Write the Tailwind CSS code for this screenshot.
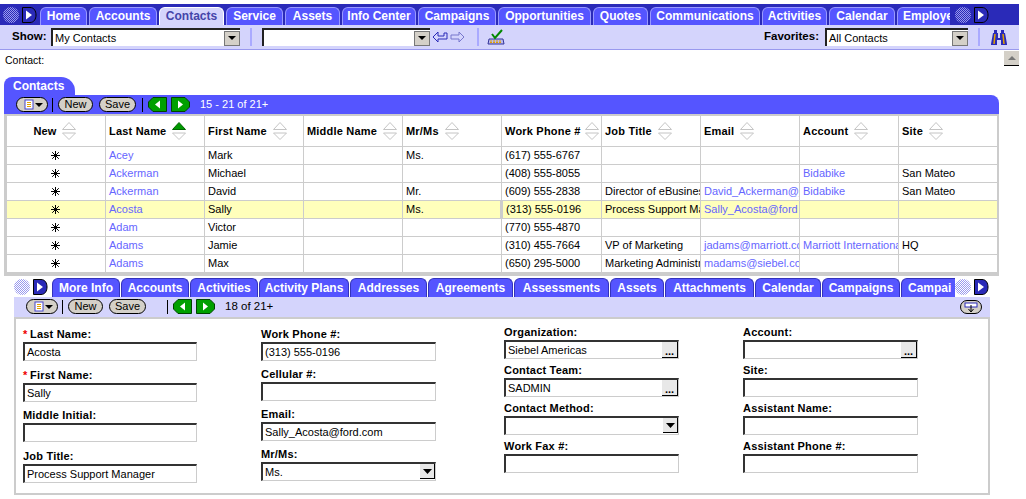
<!DOCTYPE html>
<html lang="en">
<head>
<meta charset="UTF-8" />
<title>Contacts</title>
<script src="https://cdn.jsdelivr.net/npm/@tailwindcss/browser@4"></script>
</head>
<body class="bg-white overflow-hidden">
<svg width="0" height="0" class="absolute">
  <defs>
    <pattern id="dots" width="2" height="2" patternUnits="userSpaceOnUse"><rect width="1" height="1" fill="#9999ee"/><rect x="1" y="1" width="1" height="1" fill="#9999ee"/></pattern>
    <symbol id="sort" viewBox="0 0 14 18"><path d="M7 .5 13.500 7.500H.5Z M.5 11H13.500L7 17.500Z" fill="#fff" stroke="#c4c4c4"/></symbol>
    <symbol id="star" viewBox="0 0 9 9"><path d="M4.500 0V9M0 4.500H9M1.200 1.200 7.800 7.800M7.800 1.200 1.200 7.800" stroke="#000" stroke-width="1"/></symbol>
    <symbol id="navd" viewBox="0 0 34 18"><circle cx="8" cy="9" r="8" fill="url(#dots)"/><path d="M19.500 1.500H27C31 1.500 33 5 33 9S31 16.500 27 16.500H19.500Z" fill="#2a2ab8" stroke="#000"/><path d="M23 4.500 29 9 23 13.500Z" fill="#fff"/></symbol>
    <symbol id="menu" viewBox="0 0 32 15"><rect x=".5" y=".5" width="31" height="14" rx="7" fill="#d4d0c8" stroke="#000"/><rect x="9" y="3" width="8" height="9" fill="#fff" stroke="#4444cc"/><path d="M11 5.500H15M11 7.500H15M11 9.500H15" stroke="#e0a000"/><path d="M19 6H27L23 10Z" fill="#000"/></symbol>
    <symbol id="prev" viewBox="0 0 19 15"><path d="M5 .5H18.500V14.500H5L.5 10V5Z" fill="#00a000" stroke="#004400"/><path d="M12 3.500V11.500L7 7.500Z" fill="#fff"/></symbol>
    <symbol id="next" viewBox="0 0 19 15"><path d="M14 .5H.5V14.500H14L18.500 10V5Z" fill="#00a000" stroke="#004400"/><path d="M7 3.500V11.500L12 7.500Z" fill="#fff"/></symbol>
  </defs>
</svg>

<div class="relative w-[1026px] h-[499px] overflow-hidden font-['Liberation_Sans',Arial,sans-serif] text-[11px] text-black">

  <!-- top tabs -->
  <div class="mt-[4px] h-[21px] w-[1019px] bg-[#2a2ab8] flex items-end">
    <svg class="w-[34px] h-[18px] ml-[3px] mb-[1px] shrink-0"><use href="#navd"/></svg>
    <div class="w-[910px] ml-[3px] h-[18px] overflow-hidden flex gap-[2px] text-[12px] font-bold text-white [&>div]:shrink-0 [&>div]:h-[18px] [&>div]:bg-[#5555ff] [&>div]:border [&>div]:border-b-0 [&>div]:border-[#9999ff] [&>div]:rounded-t-[6px] [&>div]:text-center [&>div]:leading-[17px]">
      <div class="w-[47px]">Home</div>
      <div class="w-[68px]">Accounts</div>
      <div class="w-[65px] !bg-[#d4d4fc] !border-white text-[#4444aa]">Contacts</div>
      <div class="w-[57px]">Service</div>
      <div class="w-[55px]">Assets</div>
      <div class="w-[74px]">Info Center</div>
      <div class="w-[78px]">Campaigns</div>
      <div class="w-[93px]">Opportunities</div>
      <div class="w-[55px]">Quotes</div>
      <div class="w-[110px]">Communications</div>
      <div class="w-[65px]">Activities</div>
      <div class="w-[66px]">Calendar</div>
      <div class="w-[70px] !text-left pl-[5px]">Employe</div>
    </div>
    <svg class="ml-[5px] w-[34px] h-[18px] mb-[1px] shrink-0"><use href="#navd"/></svg>
  </div>

  <!-- toolbar -->
  <div class="h-[25px] w-[1019px] bg-[#d4d4fc] border-b border-[#9999ee] flex items-center">
    <span class="ml-[12px] w-[39px] font-bold text-[11.500px]">Show:</span>
    <div class="w-[189px] h-[18px] bg-white border-t-2 border-l-2 border-[#222] flex items-center justify-between pl-[2px]">My Contacts
      <span class="w-[16px] h-[15px] bg-[#d4d0c8] border border-[#777] flex items-center justify-center"><svg width="8" height="4"><path d="M0 0H8L4 4Z"/></svg></span>
    </div>
    <div class="ml-[10px] w-[2px] h-[18px] bg-[#aaaaff]"></div>
    <div class="ml-[10px] w-[168px] h-[18px] bg-white border-t-2 border-l-2 border-[#222] flex items-center justify-end">
      <span class="w-[16px] h-[15px] bg-[#d4d0c8] border border-[#777] flex items-center justify-center"><svg width="8" height="4"><path d="M0 0H8L4 4Z"/></svg></span>
    </div>
    <svg class="ml-[2px]" width="34" height="14" viewBox="0 0 34 14"><path d="M6 2 1 7l5 5V9H15V3H12V6H6Z" fill="#d4d4fc" stroke="#2a2ab8"/><path d="M27 2l5 5-5 5V9H19V5H27Z" fill="#d4d4fc" stroke="#7777cc"/></svg>
    <div class="ml-[11px] w-[2px] h-[18px] bg-[#aaaaff]"></div>
    <svg class="ml-[8px]" width="18" height="16" viewBox="0 0 18 16"><path d="M2 10H16L17 15H1Z" fill="#bbbbee" stroke="#333399"/><path d="M3 12H15M3 13.500H15" stroke="#e0a000" stroke-dasharray="2 1"/><path d="M5 5 8 9 15 1" fill="none" stroke="#008800" stroke-width="2"/></svg>
    <span class="ml-auto font-bold text-[11.500px]">Favorites:</span>
    <div class="ml-[6px] w-[143px] h-[18px] bg-white border-t-2 border-l-2 border-[#222] flex items-center justify-between pl-[2px]">All Contacts
      <span class="w-[16px] h-[15px] bg-[#d4d0c8] border border-[#777] flex items-center justify-center"><svg width="8" height="4"><path d="M0 0H8L4 4Z"/></svg></span>
    </div>
    <div class="ml-[10px] w-[2px] h-[18px] bg-[#aaaaff]"></div>
    <svg class="ml-[11px] mr-[12px]" width="16" height="17" viewBox="0 0 16 17"><path d="M3 1H6V4H7V9H9V4H10V1H13V4H14L16 15V16H10V11H6V16H0V15L2 4H3Z" fill="#2a2ab8"/><path d="M4 5 3 15M12 5 13 15" stroke="#e0a000" stroke-width="1.500"/></svg>
  </div>

  <div class="absolute left-[1004px] top-[51px] w-[15px] h-[15px] bg-[#d4d0c8] border-b border-black flex items-center justify-center"><svg width="8" height="4"><path d="M4 0 8 4H0Z" fill="#777"/></svg></div>

  <div class="h-[27px] pl-[5px] pt-[4px] leading-[13px] text-[10.500px]">Contact:</div>

  <!-- contacts list -->
  <div class="ml-[4px] w-[71px] h-[18px] bg-[#5555ff] rounded-tl-[8px] rounded-tr-[14px] text-white font-bold text-[12px] pl-[9px] leading-[18px]">Contacts</div>
  <div class="ml-[4px] w-[995px] h-[19px] bg-[#5555ff] rounded-tr-[8px] flex items-center text-white pl-[12px]">
    <svg class="w-[32px] h-[15px]"><use href="#menu"/></svg>
    <div class="ml-[4px] w-[1px] h-[14px] bg-black"></div>
    <span class="ml-[5px] w-[35px] h-[15px] rounded-full bg-[#d4d0c8] border border-black text-black text-center leading-[13px]">New</span>
    <span class="ml-[6px] w-[37px] h-[15px] rounded-full bg-[#d4d0c8] border border-black text-black text-center leading-[13px]">Save</span>
    <div class="ml-[6px] w-[1px] h-[14px] bg-black"></div>
    <svg class="ml-[5px] w-[19px] h-[15px]"><use href="#prev"/></svg>
    <svg class="ml-[4px] w-[19px] h-[15px]"><use href="#next"/></svg>
    <span class="ml-[10px]">15 - 21 of 21+</span>
  </div>
  <div class="ml-[4px] w-[995px] border-x-2 border-b-[3px] border-t border-[#cccccc]">
    <table class="table-fixed border-collapse w-[991px] [&_td]:border [&_td]:border-[#cccccc] [&_td]:h-[18px] [&_td]:p-0 [&_td]:pl-[3px] [&_td]:overflow-hidden [&_td]:whitespace-nowrap [&_td]:leading-[17px]">
      <colgroup>
        <col class="w-[99px]"/><col class="w-[99px]"/><col class="w-[99px]"/><col class="w-[99px]"/><col class="w-[99px]"/><col class="w-[100px]"/><col class="w-[99px]"/><col class="w-[99px]"/><col class="w-[99px]"/><col class="w-[99px]"/>
      </colgroup>
      <tr class="font-bold tracking-[0.2px] [&_td]:!h-[31px] [&_svg]:shrink-0">
        <td><div class="flex items-center justify-center gap-[5px] pr-[6px]">New<svg class="w-[14px] h-[18px]"><use href="#sort"/></svg></div></td>
        <td><div class="flex items-center gap-[6px]">Last Name<svg width="14" height="18" viewBox="0 0 14 18"><path d="M7 .5 13.500 7.500H.5Z" fill="#009900" stroke="#006600"/><path d="M.5 11H13.500L7 17.500Z" fill="#fff" stroke="#c4c4c4"/></svg></div></td>
        <td><div class="flex items-center gap-[6px]">First Name<svg class="w-[14px] h-[18px]"><use href="#sort"/></svg></div></td>
        <td><div class="flex items-center gap-[6px]">Middle Name<svg class="w-[14px] h-[18px]"><use href="#sort"/></svg></div></td>
        <td><div class="flex items-center gap-[6px]">Mr/Ms<svg class="w-[14px] h-[18px]"><use href="#sort"/></svg></div></td>
        <td><div class="flex items-center gap-[4px]">Work Phone #<svg class="w-[14px] h-[18px]"><use href="#sort"/></svg></div></td>
        <td><div class="flex items-center gap-[6px]">Job Title<svg class="w-[14px] h-[18px]"><use href="#sort"/></svg></div></td>
        <td><div class="flex items-center gap-[6px]">Email<svg class="w-[14px] h-[18px]"><use href="#sort"/></svg></div></td>
        <td><div class="flex items-center gap-[6px]">Account<svg class="w-[14px] h-[18px]"><use href="#sort"/></svg></div></td>
        <td><div class="flex items-center gap-[6px]">Site<svg class="w-[14px] h-[18px]"><use href="#sort"/></svg></div></td>
      </tr>
      <tr>
        <td><svg class="w-[9px] h-[9px] ml-[41px]"><use href="#star"/></svg></td>
        <td class="text-[#6666ff]">Acey</td><td>Mark</td><td></td><td>Ms.</td><td>(617) 555-6767</td><td></td><td></td><td></td><td></td>
      </tr>
      <tr>
        <td><svg class="w-[9px] h-[9px] ml-[41px]"><use href="#star"/></svg></td>
        <td class="text-[#6666ff]">Ackerman</td><td>Michael</td><td></td><td></td><td>(408) 555-8055</td><td></td><td></td><td class="text-[#6666ff]">Bidabike</td><td>San Mateo</td>
      </tr>
      <tr>
        <td><svg class="w-[9px] h-[9px] ml-[41px]"><use href="#star"/></svg></td>
        <td class="text-[#6666ff]">Ackerman</td><td>David</td><td></td><td>Mr.</td><td>(609) 555-2838</td><td>Director of eBusines</td><td class="text-[#6666ff]">David_Ackerman@j</td><td class="text-[#6666ff]">Bidabike</td><td>San Mateo</td>
      </tr>
      <tr class="bg-[#ffffbb]">
        <td><svg class="w-[9px] h-[9px] ml-[41px]"><use href="#star"/></svg></td>
        <td class="text-[#6666ff]">Acosta</td><td>Sally</td><td></td><td>Ms.</td><td class="!border-l-[3px]">(313) 555-0196</td><td>Process Support Ma</td><td class="text-[#6666ff]">Sally_Acosta@ford</td><td></td><td></td>
      </tr>
      <tr>
        <td><svg class="w-[9px] h-[9px] ml-[41px]"><use href="#star"/></svg></td>
        <td class="text-[#6666ff]">Adam</td><td>Victor</td><td></td><td></td><td>(770) 555-4870</td><td></td><td></td><td></td><td></td>
      </tr>
      <tr>
        <td><svg class="w-[9px] h-[9px] ml-[41px]"><use href="#star"/></svg></td>
        <td class="text-[#6666ff]">Adams</td><td>Jamie</td><td></td><td></td><td>(310) 455-7664</td><td>VP of Marketing</td><td class="text-[#6666ff]">jadams@marriott.co</td><td class="text-[#6666ff]">Marriott Internationa</td><td>HQ</td>
      </tr>
      <tr>
        <td><svg class="w-[9px] h-[9px] ml-[41px]"><use href="#star"/></svg></td>
        <td class="text-[#6666ff]">Adams</td><td>Max</td><td></td><td></td><td>(650) 295-5000</td><td>Marketing Administra</td><td class="text-[#6666ff]">madams@siebel.co</td><td></td><td></td>
      </tr>
    </table>
  </div>

  <!-- detail tabs -->
  <div class="mt-[2px] ml-[14px] w-[976px] h-[19px] flex items-end">
    <svg class="w-[34px] h-[18px] mb-[1px] shrink-0"><use href="#navd"/></svg>
    <div class="ml-[4px] w-[903px] h-[19px] overflow-hidden flex gap-[1px] text-[12px] font-bold text-white [&>div]:shrink-0 [&>div]:h-[19px] [&>div]:bg-[#5555ff] [&>div]:border [&>div]:border-b-0 [&>div]:border-[#3333bb] [&>div]:rounded-t-[6px] [&>div]:text-center [&>div]:leading-[18px]">
      <div class="w-[68px]">More Info</div>
      <div class="w-[68px]">Accounts</div>
      <div class="w-[68px]">Activities</div>
      <div class="w-[90px]">Activity Plans</div>
      <div class="w-[77px]">Addresses</div>
      <div class="w-[85px]">Agreements</div>
      <div class="w-[95px]">Assessments</div>
      <div class="w-[54px]">Assets</div>
      <div class="w-[89px]">Attachments</div>
      <div class="w-[66px]">Calendar</div>
      <div class="w-[78px]">Campaigns</div>
      <div class="w-[70px] !text-left pl-[6px]">Campai</div>
    </div>
    <svg class="w-[34px] h-[18px] mb-[1px] shrink-0"><use href="#navd"/></svg>
  </div>
  <div class="ml-[14px] w-[976px] h-[20px] pb-[1px] bg-[#d4d4fc] flex items-center pl-[12px]">
    <svg class="w-[32px] h-[15px]"><use href="#menu"/></svg>
    <div class="ml-[4px] w-[1px] h-[14px] bg-black"></div>
    <span class="ml-[5px] w-[35px] h-[15px] rounded-full bg-[#d4d0c8] border border-black text-center leading-[13px]">New</span>
    <span class="ml-[6px] w-[37px] h-[15px] rounded-full bg-[#d4d0c8] border border-black text-center leading-[13px]">Save</span>
    <div class="ml-[21px] w-[1px] h-[14px] bg-black"></div>
    <svg class="ml-[5px] w-[19px] h-[15px]"><use href="#prev"/></svg>
    <svg class="ml-[4px] w-[19px] h-[15px]"><use href="#next"/></svg>
    <span class="ml-[10px] text-[11.500px]">18 of 21+</span>
    <svg class="ml-auto mr-[8px]" width="22" height="14" viewBox="0 0 22 14"><rect x=".5" y=".5" width="21" height="13" rx="6.500" fill="#d4d0c8" stroke="#000"/><rect x="5" y="3" width="12" height="4" fill="#fff" stroke="#2a2ab8"/><path d="M11 5V11M8.500 9 11 12 13.500 9" fill="none" stroke="#000"/></svg>
  </div>

  <!-- form -->
  <div class="ml-[14px] w-[976px] h-[178px] border-x-2 border-y-2 border-[#cccccc] pl-[7px] grid grid-cols-[238px_243px_239px_180px] font-bold tracking-[0.2px] [&_.box]:w-[175px] [&_.box]:h-[19px] [&_.box]:border-t-2 [&_.box]:border-l-2 [&_.box]:border-t-[#333] [&_.box]:border-l-[#333] [&_.box]:border-r [&_.box]:border-b [&_.box]:border-r-[#ccc] [&_.box]:border-b-[#ccc] [&_.box]:font-normal [&_.box]:tracking-normal [&_.box]:pl-[2px] [&_.box]:leading-[16px] [&_.box]:text-[11px] [&_.box]:flex [&_.box]:justify-between [&_label]:block [&_label]:h-[14px] [&_label]:leading-[13px]">
    <div class="pt-[9px] flex flex-col [&_.box]:!w-[174px]">
      <label><span class="inline-block w-[7px] text-[#ee0000]">*</span>Last Name:</label>
      <div class="box">Acosta</div>
      <label class="mt-[8px]"><span class="inline-block w-[7px] text-[#ee0000]">*</span>First Name:</label>
      <div class="box">Sally</div>
      <label class="mt-[7px]">Middle Initial:</label>
      <div class="box"></div>
      <label class="mt-[8px]">Job Title:</label>
      <div class="box">Process Support Manager</div>
    </div>
    <div class="pt-[9px] flex flex-col">
      <label>Work Phone #:</label>
      <div class="box">(313) 555-0196</div>
      <label class="mt-[7px]">Cellular #:</label>
      <div class="box"></div>
      <label class="mt-[7px]">Email:</label>
      <div class="box">Sally_Acosta@ford.com</div>
      <label class="mt-[7px]">Mr/Ms:</label>
      <div class="box">Ms.<span class="w-[15px] h-[15px] bg-[#e8e8e8] border-r border-b border-black flex items-center justify-center"><svg width="9" height="5"><path d="M0 0H9L4.500 5Z"/></svg></span></div>
    </div>
    <div class="pt-[7px] flex flex-col">
      <label>Organization:</label>
      <div class="box">Siebel Americas<span class="w-[16px] h-[16px] bg-[#e8e8e8] border-r border-b border-black flex items-end justify-center font-bold leading-[11px]">...</span></div>
      <label class="mt-[5px]">Contact Team:</label>
      <div class="box">SADMIN<span class="w-[16px] h-[16px] bg-[#e8e8e8] border-r border-b border-black flex items-end justify-center font-bold leading-[11px]">...</span></div>
      <label class="mt-[5px]">Contact Method:</label>
      <div class="box justify-end"><span></span><span class="w-[15px] h-[15px] bg-[#e8e8e8] border-r border-b border-black flex items-center justify-center"><svg width="9" height="5"><path d="M0 0H9L4.500 5Z"/></svg></span></div>
      <label class="mt-[5px]">Work Fax #:</label>
      <div class="box"></div>
    </div>
    <div class="pt-[7px] flex flex-col">
      <label>Account:</label>
      <div class="box"><span></span><span class="w-[16px] h-[16px] bg-[#e8e8e8] border-r border-b border-black flex items-end justify-center font-bold leading-[11px]">...</span></div>
      <label class="mt-[5px]">Site:</label>
      <div class="box"></div>
      <label class="mt-[5px]">Assistant Name:</label>
      <div class="box"></div>
      <label class="mt-[5px]">Assistant Phone #:</label>
      <div class="box"></div>
    </div>
  </div>
</div>
</body>
</html>
